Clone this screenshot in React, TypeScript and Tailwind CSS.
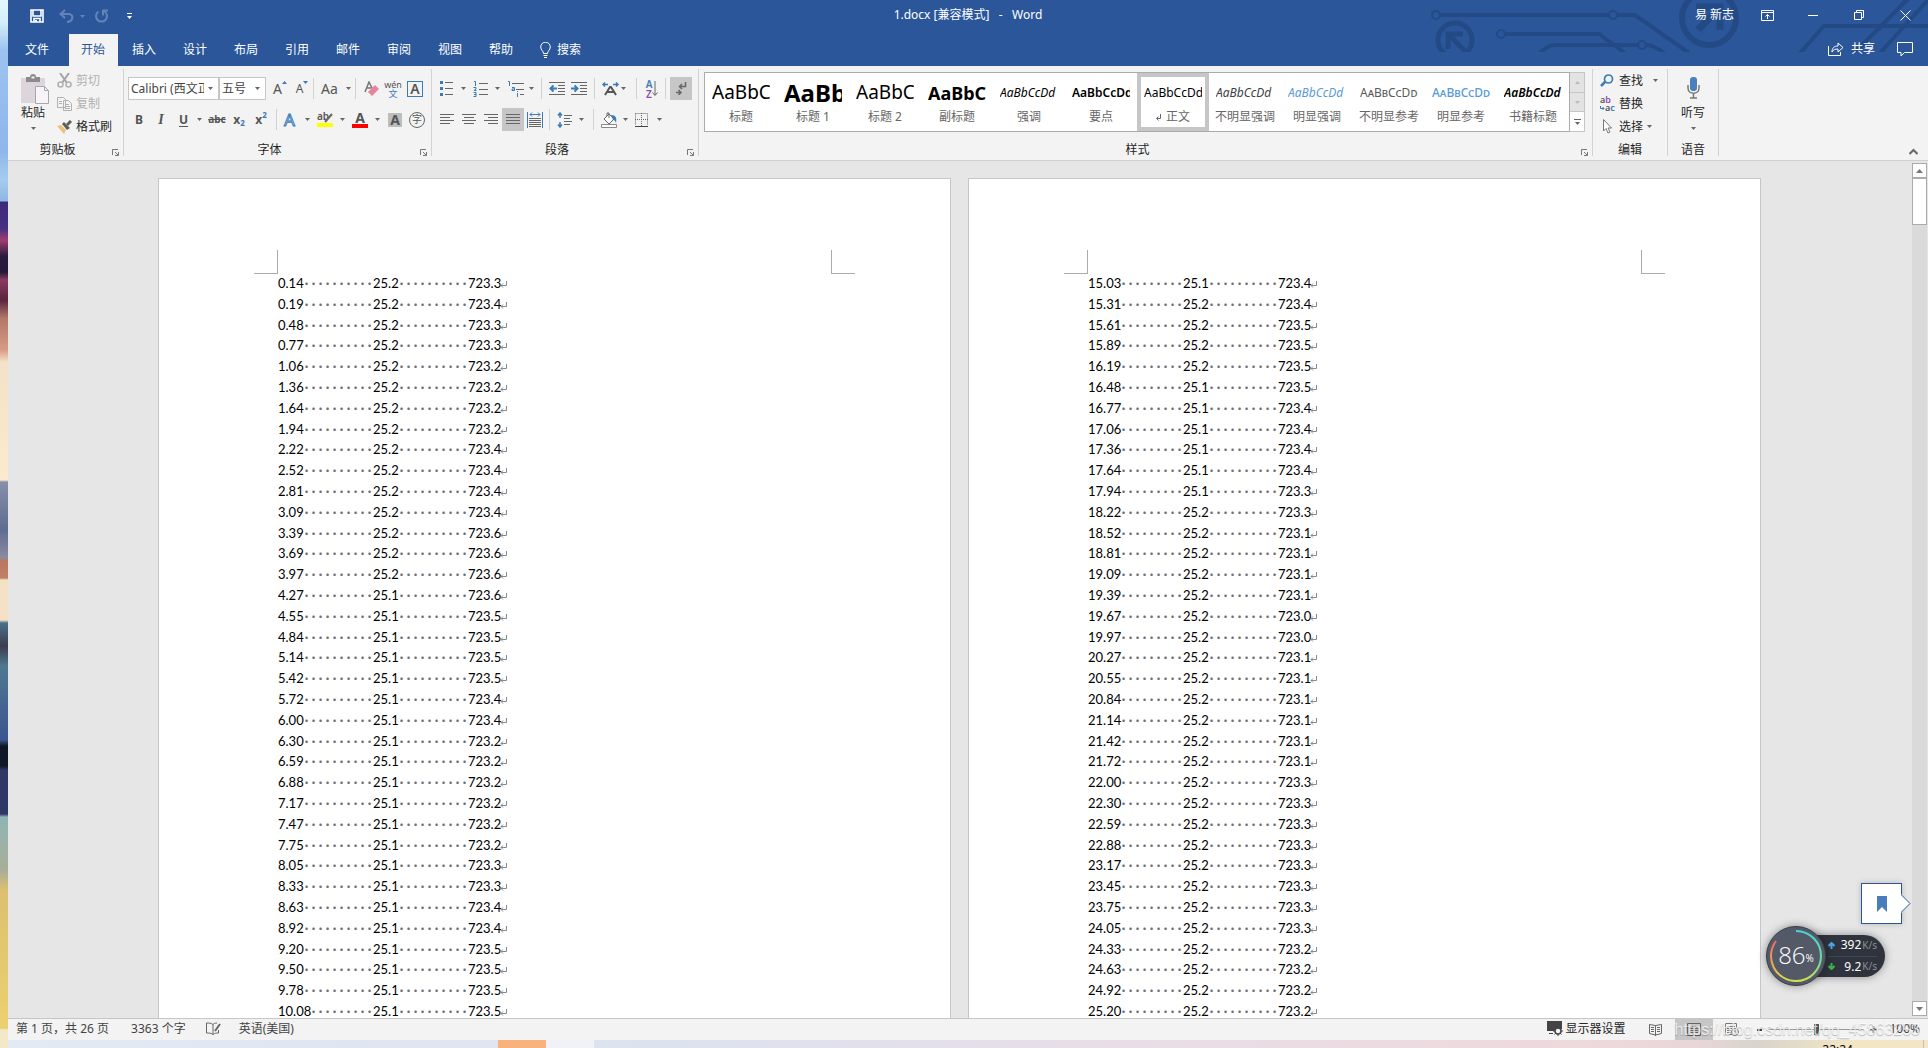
import React, { useState } from 'react';

type Row = [string, string, string];

const split = (data: string): Row[] =>
  data
    .trim()
    .split('\n')
    .map((line) => line.trim().split(' ') as Row);

const PAGE_ONE = split(`
  0.14 25.2 723.3
  0.19 25.2 723.4
  0.48 25.2 723.3
  0.77 25.2 723.3
  1.06 25.2 723.2
  1.36 25.2 723.2
  1.64 25.2 723.2
  1.94 25.2 723.2
  2.22 25.2 723.4
  2.52 25.2 723.4
  2.81 25.2 723.4
  3.09 25.2 723.4
  3.39 25.2 723.6
  3.69 25.2 723.6
  3.97 25.2 723.6
  4.27 25.1 723.6
  4.55 25.1 723.5
  4.84 25.1 723.5
  5.14 25.1 723.5
  5.42 25.1 723.5
  5.72 25.1 723.4
  6.00 25.1 723.4
  6.30 25.1 723.2
  6.59 25.1 723.2
  6.88 25.1 723.2
  7.17 25.1 723.2
  7.47 25.1 723.2
  7.75 25.1 723.2
  8.05 25.1 723.3
  8.33 25.1 723.3
  8.63 25.1 723.4
  8.92 25.1 723.4
  9.20 25.1 723.5
  9.50 25.1 723.5
  9.78 25.1 723.5
  10.08 25.1 723.5
`);

const PAGE_TWO = split(`
  15.03 25.1 723.4
  15.31 25.2 723.4
  15.61 25.2 723.5
  15.89 25.2 723.5
  16.19 25.2 723.5
  16.48 25.1 723.5
  16.77 25.1 723.4
  17.06 25.1 723.4
  17.36 25.1 723.4
  17.64 25.1 723.4
  17.94 25.1 723.3
  18.22 25.2 723.3
  18.52 25.2 723.1
  18.81 25.2 723.1
  19.09 25.2 723.1
  19.39 25.2 723.1
  19.67 25.2 723.0
  19.97 25.2 723.0
  20.27 25.2 723.1
  20.55 25.2 723.1
  20.84 25.2 723.1
  21.14 25.2 723.1
  21.42 25.2 723.1
  21.72 25.2 723.1
  22.00 25.2 723.3
  22.30 25.2 723.3
  22.59 25.2 723.3
  22.88 25.2 723.3
  23.17 25.2 723.3
  23.45 25.2 723.3
  23.75 25.2 723.3
  24.05 25.2 723.3
  24.33 25.2 723.2
  24.63 25.2 723.2
  24.92 25.2 723.2
  25.20 25.2 723.2
`);

const TABS = ['开始', '插入', '设计', '布局', '引用', '邮件', '审阅', '视图', '帮助'];

const STYLES = [
  { sample: 'AaBbC', label: '标题', look: 'text-[19px] text-black' },
  { sample: 'AaBb', label: '标题 1', look: 'text-2xl font-bold text-black' },
  { sample: 'AaBbC', label: '标题 2', look: 'text-[19px] text-black' },
  { sample: 'AaBbCc', label: '副标题', look: 'text-lg font-bold text-black' },
  { sample: 'AaBbCcDd', label: '强调', look: 'text-xs italic text-black' },
  { sample: 'AaBbCcDd', label: '要点', look: 'text-xs font-semibold text-black' },
  { sample: 'AaBbCcDd', label: '正文', look: 'text-xs text-black' },
  { sample: 'AaBbCcDd', label: '不明显强调', look: 'text-xs italic text-[#404040]' },
  { sample: 'AaBbCcDd', label: '明显强调', look: 'text-xs italic text-[#5b9bd5]' },
  { sample: 'AaBbCcDdE', label: '不明显参考', look: 'text-xs [font-variant:small-caps] text-[#5a5a5a]' },
  { sample: 'AaBbCcDd', label: '明显参考', look: 'text-xs font-medium [font-variant:small-caps] text-[#5b9bd5]' },
  { sample: 'AaBbCcDd', label: '书籍标题', look: 'text-xs font-semibold italic text-black' },
];

type SvgProps = { w: number; h: number; className?: string; children: React.ReactNode };

const Svg = ({ w, h, className = '', children }: SvgProps) => (
  <svg width={w} height={h} viewBox={`0 0 ${w} ${h}`} fill="none" className={`shrink-0 ${className}`} aria-hidden="true">
    {children}
  </svg>
);

const Caret = ({ className = 'text-[#666]' }: { className?: string }) => (
  <Svg w={5} h={3} className={className}>
    <path d="M0 0h5L2.5 3z" fill="currentColor" />
  </Svg>
);

const Sep = () => <div className="h-[21px] w-px shrink-0 bg-[#d2d2d2]" />;

type ToolProps = { label: string; width?: string; caret?: boolean; active?: boolean; children: React.ReactNode };

const Tool = ({ label, width = 'w-[22px]', caret, active, children }: ToolProps) => (
  <button
    aria-label={label}
    title={label}
    className={`flex h-[23px] shrink-0 items-center ${caret ? 'justify-between pl-[3px] pr-1' : 'justify-center'} ${width} ${active ? 'bg-[#c6c6c6]' : 'hover:bg-[#dadada]'}`}
  >
    {children}
    {caret && <Caret />}
  </button>
);

const Launcher = () => (
  <button aria-label="更多选项" className="absolute right-1 bottom-0">
    <Svg w={7} h={7}>
      <path d="M.5 6V.5H6M3 3l3 3M6.5 3v3.5H3" stroke="#777" />
    </Svg>
  </button>
);

const Group = ({ label, width, launcher, children }: { label: string; width: string; launcher?: boolean; children: React.ReactNode }) => (
  <section aria-label={label} className={`relative mt-[3px] mb-1 flex shrink-0 flex-col border-r border-[#d2d2d2] ${width}`}>
    {children}
    <div className={`mt-auto text-center leading-3 text-[#262626] ${launcher ? 'pr-4' : ''}`}>{label}</div>
    {launcher && <Launcher />}
  </section>
);

// rows are [x1, x2] pairs spaced three pixels apart
const Lines = ({ rows }: { rows: [number, number][] }) => (
  <Svg w={14} h={13}>
    {rows.map(([a, b], i) => (
      <path key={i} d={`M${a} ${i * 3 + 1.5}H${b}`} stroke="#666" />
    ))}
  </Svg>
);

const Circuit = () => (
  <svg className="pointer-events-none absolute top-0 right-0" width="528" height="52" viewBox="0 0 528 52" fill="none" stroke="#234a84" strokeWidth="4" aria-hidden="true">
    <circle cx="36" cy="15" r="4" strokeWidth="2" />
    <path d="M40 15h169M217 15h18l54 38" />
    <circle cx="213" cy="15" r="4" strokeWidth="2" />
    <circle cx="101" cy="34" r="4" strokeWidth="2" />
    <path d="M105 34h94l26 19M140 53q8-8 15-8h83M246 45q8 0 18 8" />
    <circle cx="242" cy="45" r="4" strokeWidth="2" />
    <circle cx="55" cy="40" r="17" strokeWidth="5" />
    <path d="M48 49V34h15M48 34l17 17" strokeWidth="5" />
    <circle cx="309" cy="18" r="27" strokeWidth="6" />
    <path d="M296 7h24v23M320 7l-22 23" strokeWidth="7" />
    <path d="M400 53l24-27h104M454 53l55-55M480 53l48-53M478 30L508-2" />
  </svg>
);

const TitleBar = () => (
  <div className="grid h-[34px] grid-cols-[1fr_auto_1fr] items-center pb-1">
    <div className="flex h-6 items-center pt-[2px] pl-[22px] text-white">
      <button aria-label="保存">
        <Svg w={14} h={14}>
          <path d="M1 1h12v12H1zM3 1v6h8V1M4 13V9.500h6V13" stroke="currentColor" strokeWidth="1.600" />
          <path d="M5 11h2v2H5z" fill="currentColor" />
        </Svg>
      </button>
      <button aria-label="撤消" className="ml-[15px] flex items-center gap-[6px] text-[#6583b8]">
        <Svg w={15} h={14}>
          <path d="M6 1L1.500 5 6 9M2 5h7c6 0 6 7-1 8" stroke="currentColor" strokeWidth="2" />
        </Svg>
        <Caret className="text-[#6583b8]" />
      </button>
      <button aria-label="恢复" className="ml-[9px] text-[#6583b8]">
        <Svg w={15} h={14}>
          <path d="M4.500 2.500a5.500 5.500 0 1 0 6 0M14 1.500H9v5" stroke="currentColor" strokeWidth="2" />
        </Svg>
      </button>
      <button aria-label="自定义快速访问工具栏" className="ml-[18px]">
        <Svg w={5} h={7}>
          <path d="M0 .5h5" stroke="currentColor" />
          <path d="M0 3h5L2.500 6z" fill="currentColor" />
        </Svg>
      </button>
    </div>
    <h1 className="whitespace-pre text-white">1.docx [兼容模式]{'   -   '}Word</h1>
    <div className="relative flex items-center justify-end text-white">
      <span className="mr-[10px]">易 新志</span>
      <button aria-label="功能区显示选项" className="flex w-[46px] justify-center">
        <Svg w={13} h={11}>
          <path d="M.5.5h12v10H.5zM.5 2.500h12M6.500 9V4.500M4.500 6.500l2-2 2 2" stroke="currentColor" />
        </Svg>
      </button>
      <button aria-label="最小化" className="flex w-[46px] justify-center">
        <Svg w={10} h={10}>
          <path d="M0 5.500h10" stroke="currentColor" />
        </Svg>
      </button>
      <button aria-label="向下还原" className="flex w-[46px] justify-center">
        <Svg w={10} h={10}>
          <path d="M.5 2.500h7v7h-7zM2.500 2V.5h7v7H8" stroke="currentColor" />
        </Svg>
      </button>
      <button aria-label="关闭" className="flex w-[46px] justify-center">
        <Svg w={11} h={11}>
          <path d="M.5.5l10 10M10.500.5l-10 10" stroke="currentColor" />
        </Svg>
      </button>
    </div>
  </div>
);

const TabBar = ({ active, onSelect }: { active: string; onSelect: (tab: string) => void }) => (
  <nav className="flex h-8 items-stretch text-white">
    <button className="w-[61px] pr-[3px]">文件</button>
    <div className="flex gap-[2px]">
      {TABS.map((tab) => (
        <button
          key={tab}
          onClick={() => onSelect(tab)}
          className={`w-[49px] pr-px ${tab === active ? 'bg-[#f3f3f3] text-[#2b579a]' : 'hover:bg-[#3e6db5]'}`}
        >
          {tab}
        </button>
      ))}
    </div>
    <button className="ml-[14px] flex items-center gap-[6px]">
      <Svg w={11} h={16}>
        <path d="M3.500 11.500C3.500 9 .7 8 .7 5a4.800 4.800 0 0 1 9.600 0c0 3-2.800 4-2.800 6.500zM3.500 13.500h4M4 15.500h3" stroke="currentColor" />
      </Svg>
      搜索
    </button>
    <div className="relative ml-auto flex items-center pr-[15px] pb-[2px]">
      <button className="flex items-center gap-[7px]">
        <Svg w={16} h={14}>
          <path d="M.5 4v9.500h12V10M4 10c0-4 2-6 6-6V1l5 4.500-5 4.500V7c-3 0-4.500.5-6 3z" stroke="currentColor" />
        </Svg>
        共享
      </button>
      <button aria-label="批注" className="ml-[22px]">
        <Svg w={16} h={15}>
          <path d="M.5.5h15v10H7.500L4 14v-3.500H.5z" stroke="currentColor" />
        </Svg>
      </button>
    </div>
  </nav>
);

const ClipboardGroup = () => (
  <Group label="剪贴板" width="w-[116px]" launcher>
    <div className="flex gap-2 pl-[13px]">
      <button className="flex w-7 flex-col items-center pt-[5px] text-[#262626]">
        <Svg w={28} h={31}>
          <path d="M0 4h24v25H0z" fill="#dcd6dc" />
          <path d="M5 3h4a3 3 0 0 1 6 0h4v5H5z" fill="#8c8a8e" />
          <path d="M10.500 3.500h3" stroke="#f3f3f3" strokeWidth="2" />
          <path d="M14.500 12.500h9l4 4v13h-13z" fill="#f7f3f7" stroke="#a9a5aa" />
          <path d="M23.500 12.500v4h4" stroke="#a9a5aa" />
        </Svg>
        <span className="mr-1 leading-4">粘贴</span>
        <span className="mt-[6px] mr-1 flex">
          <Caret />
        </span>
      </button>
      <div className="flex flex-col">
        <button className="flex h-[23px] items-center gap-1 text-[#b1b1b1]">
          <Svg w={15} h={15}>
            <path d="M3 0l7 10M12 0L5 10" stroke="#a5a5a5" strokeWidth="2" />
            <circle cx="3.500" cy="11.500" r="2.500" stroke="#b1b1b1" strokeWidth="1.500" />
            <circle cx="11.500" cy="11.500" r="2.500" stroke="#b1b1b1" strokeWidth="1.500" />
          </Svg>
          剪切
        </button>
        <button className="flex h-[23px] items-center gap-1 text-[#b1b1b1]">
          <Svg w={15} h={14}>
            <path d="M.5.5h6l2 2v8h-8zM6.500 3.500h5l3 3v7h-8z" fill="#f3f3f3" stroke="#b1b1b1" />
            <path d="M2 4.500h3M2 6.500h3M8 7.500h4M8 9.500h5M8 11.500h5" stroke="#b1b1b1" />
          </Svg>
          复制
        </button>
        <button className="flex h-[23px] items-center gap-1 text-[#262626]">
          <Svg w={15} h={14}>
            <path d="M0 6l4-1 5 5-2 4z" fill="#ecc07d" />
            <path d="M5 4l2-2 6 6-3 2z" fill="#5f5f5f" />
            <path d="M10 5l4-4" stroke="#5f5f5f" strokeWidth="3" />
          </Svg>
          格式刷
        </button>
      </div>
    </div>
  </Group>
);

const Combo = ({ label, width, value }: { label: string; width: string; value: string }) => (
  <label className={`relative flex h-[23px] items-center border border-[#c6c6c6] bg-white ${width}`}>
    <span className="sr-only">{label}</span>
    <select defaultValue={value} className="mr-[14px] h-full w-full min-w-0 appearance-none overflow-hidden pl-[2px] text-[#444] outline-none">
      <option>{value}</option>
    </select>
    <span className="pointer-events-none absolute right-[5px]">
      <Caret />
    </span>
  </label>
);

const FontGroup = () => (
  <Group label="字体" width="w-[308px]" launcher>
    <div className="flex flex-col gap-2 pt-2 pl-1 text-[#555]">
      <div className="flex items-center">
        <Combo label="字体" width="w-[91px]" value="Calibri (西文正文)" />
        <Combo label="字号" width="w-[47px]" value="五号" />
        <div className="ml-[3px] flex items-center">
          <Tool label="增大字号">
            <span className="text-sm">A</span>
            <Svg w={5} h={3} className="mb-3">
              <path d="M0 3h5L2.500 0z" fill="#3d7ab8" />
            </Svg>
          </Tool>
          <Tool label="减小字号">
            <span className="text-xs">A</span>
            <Svg w={5} h={3} className="mb-3">
              <path d="M0 0h5L2.500 3z" fill="#3d7ab8" />
            </Svg>
          </Tool>
        </div>
        <Sep />
        <Tool label="更改大小写" width="w-[41px]" caret>
          <span className="pl-1 text-sm">Aa</span>
        </Tool>
        <Sep />
        <div className="ml-1 flex">
          <Tool label="清除所有格式">
            <Svg w={15} h={16}>
              <path d="M1 11L5 1l4 8M3 7h4" stroke="#777" strokeWidth="1.500" />
              <path d="M4 11l7-7 4 4-7 7z" fill="#e8839b" />
            </Svg>
          </Tool>
          <Tool label="拼音指南">
            <span className="flex flex-col items-center text-[9px] leading-[9px]">
              <span>wén</span>
              <span className="text-[#3d7ab8]">文</span>
            </span>
          </Tool>
          <Tool label="字符边框">
            <span className="flex h-4 w-4 items-center justify-center border border-[#3d7ab8] text-sm font-semibold">A</span>
          </Tool>
        </div>
      </div>
      <div className="flex items-center font-bold">
        <Tool label="加粗">B</Tool>
        <Tool label="倾斜">
          <span className="font-['Liberation_Serif'] text-sm italic">I</span>
        </Tool>
        <Tool label="下划线" width="w-[34px]" caret>
          <span className="pl-1 underline underline-offset-2">U</span>
        </Tool>
        <Tool label="删除线">
          <span className="text-[10px] line-through">abc</span>
        </Tool>
        <Tool label="下标">
          x<span className="mt-2 text-[8px] text-[#3d7ab8]">2</span>
        </Tool>
        <Tool label="上标">
          x<span className="mb-2 text-[8px] text-[#3d7ab8]">2</span>
        </Tool>
        <div className="ml-1 flex items-center gap-[3px]">
          <Sep />
          <Tool label="文本效果" width="w-[34px]" caret>
            <Svg w={14} h={16}>
              <text x="1" y="14" fontSize="17" fontWeight="400" fill="#fff" stroke="#3d7ab8" strokeWidth="1">
                A
              </text>
            </Svg>
          </Tool>
        </div>
        <Tool label="突出显示颜色" width="w-[35px]" caret>
          <span className="flex w-4 flex-col items-center">
            <Svg w={16} h={11}>
              <text x="0" y="8" fontSize="10" fontWeight="600" fill="#555">
                ab
              </text>
              <path d="M8 10l7-8" stroke="#666" strokeWidth="2" />
            </Svg>
            <span className="h-1 w-4 bg-[#ffff00]" />
          </span>
        </Tool>
        <Tool label="字体颜色" width="w-[35px]" caret>
          <span className="flex w-4 flex-col items-center text-sm leading-3">
            A<span className="h-1 w-4 bg-[#ff0000]" />
          </span>
        </Tool>
        <Tool label="字符底纹">
          <span className="flex h-[14px] w-[14px] items-center justify-center bg-[#bdbdbd] text-sm">A</span>
        </Tool>
        <Tool label="带圈字符">
          <span className="flex h-4 w-4 items-center justify-center rounded-full border border-[#666] text-[10px] font-normal">字</span>
        </Tool>
      </div>
    </div>
  </Group>
);

const ParagraphGroup = () => (
  <Group label="段落" width="w-[267px]" launcher>
    <div className="flex flex-col gap-2 pt-2 pl-1 text-[#555]">
      <div className="flex items-center">
        <Tool label="项目符号" width="w-[34px]" caret>
          <Svg w={15} h={15}>
            <path d="M1 0h3v3H1zM1 6h3v3H1zM1 12h3v3H1z" fill="#3d7ab8" />
            <path d="M6 1.500h8M6 7.500h8M6 13.500h8" stroke="#666" />
          </Svg>
        </Tool>
        <Tool label="编号" width="w-[34px]" caret>
          <Svg w={16} h={16}>
            <path d="M1 .5h1.500V5M.5 6.500H3v1.500L1 9.500h2.500M.5 11.500H3v4H.5M1 13.500h2" stroke="#3d7ab8" />
            <path d="M6 2.500h9M6 8.500h9M6 13.500h9" stroke="#666" />
          </Svg>
        </Tool>
        <Tool label="多级列表" width="w-[34px]" caret>
          <Svg w={17} h={16}>
            <path d="M1 .5h1.500V5M5 6.500h2.500v3H5V8h2M10.500 10v1M10.500 12v4" stroke="#3d7ab8" />
            <path d="M5 2.500h12M9 8.500h8M13 13.500h4" stroke="#666" />
          </Svg>
        </Tool>
        <div className="mr-1 ml-[3px]">
          <Sep />
        </div>
        <Tool label="减少缩进量">
          <Svg w={16} h={13}>
            <path d="M0 .5h16M9 3.500h7M9 6.500h7M9 9.500h7M0 12.500h16" stroke="#666" />
            <path d="M8 6.500H2M4.500 3.500l-3 3 3 3" stroke="#3d7ab8" strokeWidth="2" />
          </Svg>
        </Tool>
        <Tool label="增加缩进量">
          <Svg w={16} h={13}>
            <path d="M0 .5h16M9 3.500h7M9 6.500h7M9 9.500h7M0 12.500h16" stroke="#666" />
            <path d="M0 6.500h6M3.500 3.500l3 3-3 3" stroke="#3d7ab8" strokeWidth="2" />
          </Svg>
        </Tool>
        <div className="mr-1 ml-1">
          <Sep />
        </div>
        <Tool label="中文版式" width="w-[31px]" caret>
          <Svg w={17} h={14}>
            <path d="M3 13l5-8h1l5 8M5 10h7" stroke="#555" strokeWidth="2" />
            <path d="M6 2.500H1M3 .5l-2 2 2 2M11 2.500h5M14 .5l2 2-2 2" stroke="#3d7ab8" strokeWidth="1.500" />
          </Svg>
        </Tool>
        <div className="mx-[6px]">
          <Sep />
        </div>
        <Tool label="排序" width="w-[18px]">
          <span className="flex flex-col text-[10px] leading-[10px] font-semibold">
            <span className="text-[#3d7ab8]">A</span>
            <span className="text-[#8d4fa8]">Z</span>
          </span>
          <Svg w={6} h={16}>
            <path d="M3 0v14M.5 11.500L3 14.500l2.500-3" stroke="#666" />
          </Svg>
        </Tool>
        <div className="mx-1">
          <Sep />
        </div>
        <Tool label="显示编辑标记" active>
          <Svg w={12} h={13}>
            <path d="M10.500 0v4.500H5M7 2L4.500 4.500 7 7M1 10.500h5M3.500 8L6 10.500 3.500 13" stroke="#666" strokeWidth="1.500" />
          </Svg>
        </Tool>
      </div>
      <div className="flex items-center">
        <Tool label="左对齐">
          <Lines rows={[[0, 14], [0, 10], [0, 14], [0, 10]]} />
        </Tool>
        <Tool label="居中">
          <Lines rows={[[0, 14], [2, 12], [0, 14], [2, 12]]} />
        </Tool>
        <Tool label="右对齐">
          <Lines rows={[[0, 14], [4, 14], [0, 14], [4, 14]]} />
        </Tool>
        <Tool label="两端对齐" active>
          <Lines rows={[[0, 14], [0, 14], [0, 14], [0, 14]]} />
        </Tool>
        <Tool label="分散对齐">
          <Svg w={16} h={16}>
            <path d="M.5 0v16M15.500 0v16M3 2.500h10M5 .5l-2 2 2 2M11 .5l2 2-2 2" stroke="#3d7ab8" />
            <path d="M2 6.500h12M2 8.500h12M2 10.500h12M2 12.500h12M2 14.500h12" stroke="#666" />
          </Svg>
        </Tool>
        <div className="mr-1 ml-[3px]">
          <Sep />
        </div>
        <Tool label="行距" width="w-[34px]" caret>
          <Svg w={15} h={16}>
            <path d="M3 1v5M1 3.500l2-2.500 2 2.500M3 10v5M1 12.500L3 15l2-2.500" stroke="#3d7ab8" strokeWidth="1.500" />
            <path d="M7 3.500h8M7 6.500h6M7 9.500h8M7 12.500h6" stroke="#666" />
          </Svg>
        </Tool>
        <div className="mr-1 ml-[5px]">
          <Sep />
        </div>
        <Tool label="底纹" width="w-[34px]" caret>
          <Svg w={17} h={16}>
            <path d="M3 7l5-5 5 5-5 5zM6 4V1h2v5" fill="#fff" stroke="#666" />
            <path d="M10 3c5 0 6 3 5 8-1-3-2-3-3-3z" fill="#3d7ab8" />
            <path d="M.5 12.500h15v3H.5z" fill="#fff" stroke="#888" />
          </Svg>
        </Tool>
        <Tool label="边框" width="w-[34px]" caret>
          <Svg w={14} h={14}>
            <path d="M.5.5h12v12M.5.5v12M6.500 0v13M0 6.500h13" stroke="#666" strokeDasharray="1 1" />
            <path d="M0 13.500h13" stroke="#444" />
          </Svg>
        </Tool>
      </div>
    </div>
  </Group>
);

const StylesGroup = () => {
  const [selected, setSelected] = useState('正文');
  return (
    <Group label="样式" width="w-[894px]" launcher>
      <div className="mt-[3px] ml-[5px] flex h-[60px]">
        <div className="flex border border-[#ababab] bg-white">
          {STYLES.map(({ sample, label, look }) => (
            <button
              key={label}
              onClick={() => setSelected(label)}
              className={`flex w-[72px] flex-col justify-between overflow-hidden border-4 px-[3px] pt-1 whitespace-nowrap ${selected === label ? 'border-[#c6c6c6]' : 'border-transparent'}`}
            >
              <span className={`flex h-6 w-full items-center overflow-hidden ${look}`}>{sample}</span>
              <span className="flex w-full items-center justify-center leading-5 text-[#666]">
                {label === '正文' && (
                  <Svg w={5} h={7} className="mr-[5px]">
                    <path d="M4.500 0v4.500H1M2.500 2.500l-2 2 2 2" stroke="#666" />
                  </Svg>
                )}
                {label}
              </span>
            </button>
          ))}
        </div>
        <div className="flex w-[15px] flex-col border-y border-r border-[#c6c6c6] bg-[#e3e3e3]">
          <button aria-label="上一行" className="flex flex-1 items-center justify-center border-b border-[#c6c6c6]">
            <Caret className="rotate-180 text-[#bbb]" />
          </button>
          <button aria-label="下一行" className="flex flex-1 items-center justify-center border-b border-[#c6c6c6]">
            <Caret className="text-[#bbb]" />
          </button>
          <button aria-label="其他" className="flex flex-1 items-center justify-center bg-white">
            <Svg w={7} h={6}>
              <path d="M0 .5h7" stroke="#666" />
              <path d="M1 3h5L3.500 6z" fill="#666" />
            </Svg>
          </button>
        </div>
      </div>
    </Group>
  );
};

const EditGroup = () => (
  <Group label="编辑" width="w-[75px]">
    <div className="flex flex-col items-start pl-[7px] text-[#262626]">
      <button className="flex h-[23px] items-center">
        <Svg w={14} h={13} className="mr-[5px]">
          <circle cx="8.500" cy="5" r="4" stroke="#3d7ab8" strokeWidth="1.700" />
          <path d="M5.500 7.500L1 12" stroke="#3d7ab8" strokeWidth="2.500" />
        </Svg>
        查找
        <span className="ml-[10px]">
          <Caret />
        </span>
      </button>
      <button className="flex h-[23px] items-center">
        <Svg w={16} h={16} className="mr-[3px]">
          <text x="0" y="7" fontSize="9" fontWeight="600" fill="#555">
            a<tspan fill="#8d4fa8">b</tspan>
          </text>
          <text x="5" y="15" fontSize="9" fontWeight="600" fill="#555">
            a<tspan fill="#3d7ab8">c</tspan>
          </text>
          <path d="M.5 10v2.500H4M2.500 11l1.500 1.500L2.500 14" stroke="#3d7ab8" />
        </Svg>
        替换
      </button>
      <button className="flex h-[23px] items-center">
        <Svg w={14} h={15} className="mr-[5px]">
          <path d="M3.500.5v11.500l2.500-2.500 2 4.500 2-1-2-4h3.500z" fill="#fff" stroke="#777" />
        </Svg>
        选择
        <span className="ml-1">
          <Caret />
        </span>
      </button>
    </div>
  </Group>
);

const VoiceGroup = () => (
  <Group label="语音" width="w-[51px]">
    <button className="flex flex-col items-center pt-2 text-[#262626]">
      <Svg w={13} h={22}>
        <rect x="3" y="0" width="7" height="14" rx="3" fill="#4a80bd" />
        <path d="M1 8v3c0 7 11 7 11 0V8M6.500 16v5M3 21h7" stroke="#777" strokeWidth="1.500" />
      </Svg>
      <span className="mt-[6px] leading-4">听写</span>
      <span className="mt-[6px] flex">
        <Caret />
      </span>
    </button>
  </Group>
);

const Ribbon = () => (
  <div className="flex h-[95px] shrink-0 border-b border-[#d0d0d0] bg-[#f3f3f3]">
    <ClipboardGroup />
    <FontGroup />
    <ParagraphGroup />
    <StylesGroup />
    <EditGroup />
    <VoiceGroup />
    <button aria-label="折叠功能区" className="mr-[10px] mb-1 ml-auto self-end">
      <Svg w={9} h={8}>
        <path d="M.5 6l4-4 4 4" stroke="#666" strokeWidth="2" />
      </Svg>
    </button>
  </div>
);

// each space in the document shows as a centred dot seven pixels wide
const Spaces = ({ count }: { count: number }) => (
  <span className="flex font-bold text-[#707070]">
    {Array.from({ length: count }, (_, i) => (
      <span key={i} className="w-[7px] text-center">
        ·
      </span>
    ))}
  </span>
);

const DocPage = ({ rows }: { rows: Row[] }) => (
  <article className="w-[793px] shrink-0 border border-b-0 border-[#c6c6c6] bg-white px-[95px] pt-[71px]">
    <div className="flex justify-between">
      <div className="h-6 w-6 border-r border-b border-[#ababab]" />
      <div className="h-6 w-6 border-b border-l border-[#ababab]" />
    </div>
    <div className="pl-6 font-['Lato','Noto_Sans',sans-serif] text-[13px] text-black">
      {rows.map(([time, temp, pressure]) => (
        <p key={time} className="flex h-[21px] items-start leading-[19px] nth-[5n+3]:h-5">
          <span className={time.length > 4 ? 'w-8' : 'w-[25px]'}>{time}</span>
          <Spaces count={time.length > 4 ? 9 : 10} />
          <span className="w-[25px]">{temp}</span>
          <Spaces count={10} />
          <span className="w-8">{pressure}</span>
          <Svg w={7} h={7} className="mt-[7px]">
            <path d="M6.500 0v4.500H1M3 2.500l-2 2 2 2" stroke="#888" />
          </Svg>
        </p>
      ))}
    </div>
  </article>
);

const ScrollBar = () => (
  <div className="mt-[2px] mr-px mb-[2px] flex w-[15px] flex-col bg-[#dadada]">
    <button aria-label="向上滚动" className="flex h-[15px] items-center justify-center border border-[#ababab] bg-white">
      <Svg w={7} h={4}>
        <path d="M0 4h7L3.500 0z" fill="#777" />
      </Svg>
    </button>
    <div className="h-[47px] border border-[#ababab] bg-white" />
    <button aria-label="向下滚动" className="mt-auto flex h-[15px] items-center justify-center border border-[#ababab] bg-white">
      <Svg w={7} h={4}>
        <path d="M0 0h7L3.500 4z" fill="#777" />
      </Svg>
    </button>
  </div>
);

const StatusBar = () => {
  const [zoom, setZoom] = useState(50);
  return (
    <footer className="relative flex h-[22px] shrink-0 items-center border-t border-[#c6c6c6] bg-[#f3f3f3] pl-2 text-[#444]">
      <div className="flex items-center pb-[2px]">
        <span>第 1 页，共 26 页</span>
        <span className="ml-[22px]">3363 个字</span>
        <button aria-label="校对" className="ml-5">
          <Svg w={15} h={13}>
            <path d="M7 2.500C5 1 3 1 .5 1v10c2.500 0 4.500 0 6.500 1.500zM7 2.500C8 1.500 9 1 11 1M7 12.500c2-1.500 3-1.500 5.500-1.500V8" stroke="#666" />
            <path d="M9 9l5-7" stroke="#666" strokeWidth="2" />
          </Svg>
        </button>
        <span className="ml-[18px]">英语(美国)</span>
      </div>
      <div className="ml-auto flex h-full items-center">
        <button className="flex items-center gap-[2px] pb-[2px] text-[#262626]">
          <Svg w={16} h={15}>
            <path d="M0 0h15v8H9l-2 2H0zM2 12h4v1H2z" fill="#444" />
            <circle cx="11" cy="10" r="3" fill="#f3f3f3" stroke="#444" strokeWidth="1.500" />
            <path d="M11 5v10M6 10h10M7.500 6.500l7 7M14.500 6.500l-7 7" stroke="#444" strokeDasharray="2 6" />
          </Svg>
          显示器设置
        </button>
        <button aria-label="阅读视图" className="ml-6">
          <Svg w={13} h={12}>
            <path d="M6.500 1.500L.5.5v9l6 1.500 6-1.500v-9zM6.500 1.500V12M2 3.500h3M2 5.500h3M2 7.500h3M8 3.500h3M8 5.500h3M8 7.500h3" stroke="#666" />
          </Svg>
        </button>
        <button aria-label="页面视图" className="ml-[13px] flex h-full w-[38px] items-center justify-center bg-[#c6c6c6]">
          <Svg w={14} h={13}>
            <path d="M.5.5h13v12H.5zM3 3.500h8M3 5.500h8M3 7.500h8M3 9.500h8" stroke="#666" />
          </Svg>
        </button>
        <button aria-label="Web 版式视图" className="ml-3">
          <Svg w={14} h={13}>
            <path d="M11.500 5V.5H.5v11H7M2 3.500h8M2 5.500h5M2 7.500h4M2 9.500h4" stroke="#777" />
            <circle cx="10" cy="9" r="3.500" fill="#f3f3f3" stroke="#777" />
            <path d="M10 7v2h2" stroke="#777" />
          </Svg>
        </button>
        <button aria-label="缩小" className="ml-[18px] flex">
          <Svg w={5} h={2}>
            <path d="M0 0h5v2H0z" fill="#444" />
          </Svg>
        </button>
        <input
          type="range"
          aria-label="缩放"
          value={zoom}
          onChange={(e) => setZoom(Number(e.target.value))}
          className="mx-[6px] h-3 w-24 appearance-none bg-[linear-gradient(#999,#999)] bg-[length:100%_1px] bg-center bg-no-repeat [&::-webkit-slider-thumb]:h-[11px] [&::-webkit-slider-thumb]:w-[5px] [&::-webkit-slider-thumb]:appearance-none [&::-webkit-slider-thumb]:bg-[#555]"
        />
        <button aria-label="放大" className="flex">
          <Svg w={7} h={7}>
            <path d="M0 3.500h7M3.500 0v7" stroke="#444" strokeWidth="1.500" />
          </Svg>
        </button>
        <span className="mr-2 ml-3 pb-[2px]">100%</span>
      </div>
      <span className="pointer-events-none absolute right-2 font-['Liberation_Sans',sans-serif] text-base text-white/75 [text-shadow:0_1px_1px_rgba(0,0,0,0.25)]">
        https://blog.csdn.net/qq_45863253
      </span>
    </footer>
  );
};

const BookmarkTip = () => (
  <button aria-label="继续阅读" className="absolute right-[26px] bottom-[94px] flex h-[41px] w-[41px] items-center justify-center border border-[#2b579a] bg-white shadow-[0_0_6px_rgba(0,0,0,0.2)]">
    <Svg w={10} h={16}>
      <path d="M0 0h10v16l-5-5-5 5z" fill="#4a7ebb" />
    </Svg>
    <Svg w={10} h={19} className="absolute left-[39px]">
      <path d="M0 0l9 9.500L0 19z" fill="#fff" />
      <path d="M0 .5l9 9-9 9" stroke="#2b579a" />
    </Svg>
  </button>
);

const NetMeter = () => (
  <div className="absolute right-[43px] bottom-8 flex items-center">
    <div className="relative z-10 h-[60px] w-[60px] rounded-full border border-[#3c404b] bg-[#545968] shadow-[0_0_8px_rgba(0,0,0,0.4)]">
      <Svg w={58} h={58}>
        <defs>
          <linearGradient id="ringRight" x1="0" y1="0" x2="0" y2="1">
            <stop offset="0" stopColor="#45d8d8" />
            <stop offset="0.600" stopColor="#6fdc9c" />
            <stop offset="1" stopColor="#d6dc50" />
          </linearGradient>
          <linearGradient id="ringLeft" x1="0" y1="0" x2="0" y2="1">
            <stop offset="0" stopColor="#ef6a68" />
            <stop offset="0.500" stopColor="#f0a050" />
            <stop offset="1" stopColor="#d6dc50" />
          </linearGradient>
        </defs>
        <path d="M29 4a25 25 0 0 1 0 50" stroke="url(#ringRight)" strokeWidth="2" />
        <path d="M29 54A25 25 0 0 1 9 14" stroke="url(#ringLeft)" strokeWidth="2" />
      </Svg>
      <div className="absolute inset-0 flex items-center justify-center pb-[2px] font-['Open_Sans',sans-serif] text-2xl font-light text-white">
        86<span className="mt-2 text-[10px] font-normal">%</span>
      </div>
    </div>
    <div className="-ml-5 flex h-[42px] w-[79px] flex-col rounded-r-full bg-[#2f333d] pr-2 pl-[22px] text-xs text-white shadow-[0_0_8px_rgba(0,0,0,0.4)]">
      <div className="flex flex-1 items-center border-b border-[#444853]">
        <Svg w={7} h={7}>
          <path d="M3.500 7V1M.5 4l3-3 3 3" stroke="#4aa8e8" strokeWidth="2" />
        </Svg>
        <span className="ml-auto leading-5">392</span>
        <span className="pl-px text-[10px] text-[#8b8f99]">K/s</span>
      </div>
      <div className="flex flex-1 items-center">
        <Svg w={7} h={7}>
          <path d="M3.500 0v6M.5 3l3 3 3-3" stroke="#3cb44a" strokeWidth="2" />
        </Svg>
        <span className="ml-auto leading-5">9.2</span>
        <span className="pl-px text-[10px] text-[#8b8f99]">K/s</span>
      </div>
    </div>
  </div>
);

const Wallpaper = () => (
  <div className="w-2 shrink-0 bg-[linear-gradient(#e4f6fb_0px,#d4eefa_22px,#9cc3f0_50px,#8fb6ea_150px,#a6cbf0_180px,#8fb6e2_201px,#3a2c78_202px,#463080_228px,#a03c70_240px,#2a1b40_256px,#241838_272px,#8a3a60_280px,#5a2440_300px,#b07868_318px,#d89c84_350px,#f4e2c8_362px,#fbeacd_480px,#8590a8_482px,#5f6c92_530px,#8a8ca0_558px,#b87860_560px,#c08068_578px,#f5e2c4_580px,#f5e2c4_620px,#4a7088_623px,#3c3c4e_646px,#4f7890_666px,#3a5590_740px,#101828_746px,#101828_766px,#2e3766_770px,#2e3766_814px,#8fb5b5_817px,#a9ae98_870px,#dcc070_890px,#ecd070_1028px,#f3e8c8_1030px)]" />
);

const TaskBar = () => (
  <div className="relative flex h-2 shrink-0 overflow-hidden bg-[linear-gradient(90deg,#e4eaf4_0%,#dde2ef_35%,#e9dde6_60%,#eed9dc_82%,#e9d6d8_88%,#d8d4cc_91%,#f2e6c4_96%,#f3e6c8_100%)]">
    <div className="ml-[490px] w-12 bg-[#f9b27c]" />
    <div className="w-12 bg-[#f1f2f8]" />
    <span className="mt-[2px] mr-[75px] ml-auto leading-4 text-black">22:24</span>
    <div className="absolute right-1 h-full w-px bg-[#c8bfa8]" />
  </div>
);

const App: React.FC = () => {
  const [tab, setTab] = useState('开始');

  return (
    <div className="flex h-screen w-full overflow-hidden font-['Noto_Sans','Noto_Sans_CJK_SC',sans-serif] text-xs select-none">
      <Wallpaper />
      <div className="flex min-w-0 flex-1 flex-col">
        <header className="relative shrink-0 bg-[#2b579a]">
          <Circuit />
          <TitleBar />
          <TabBar active={tab} onSelect={setTab} />
        </header>
        <Ribbon />
        <main className="relative flex min-h-0 flex-1 overflow-hidden bg-[#e6e6e6]">
          <div className="flex min-w-0 flex-1 justify-center gap-[17px] overflow-hidden pt-[17px] pr-px">
            <DocPage rows={PAGE_ONE} />
            <DocPage rows={PAGE_TWO} />
          </div>
          <ScrollBar />
          <BookmarkTip />
          <NetMeter />
        </main>
        <StatusBar />
        <TaskBar />
      </div>
    </div>
  );
};

export default App;
